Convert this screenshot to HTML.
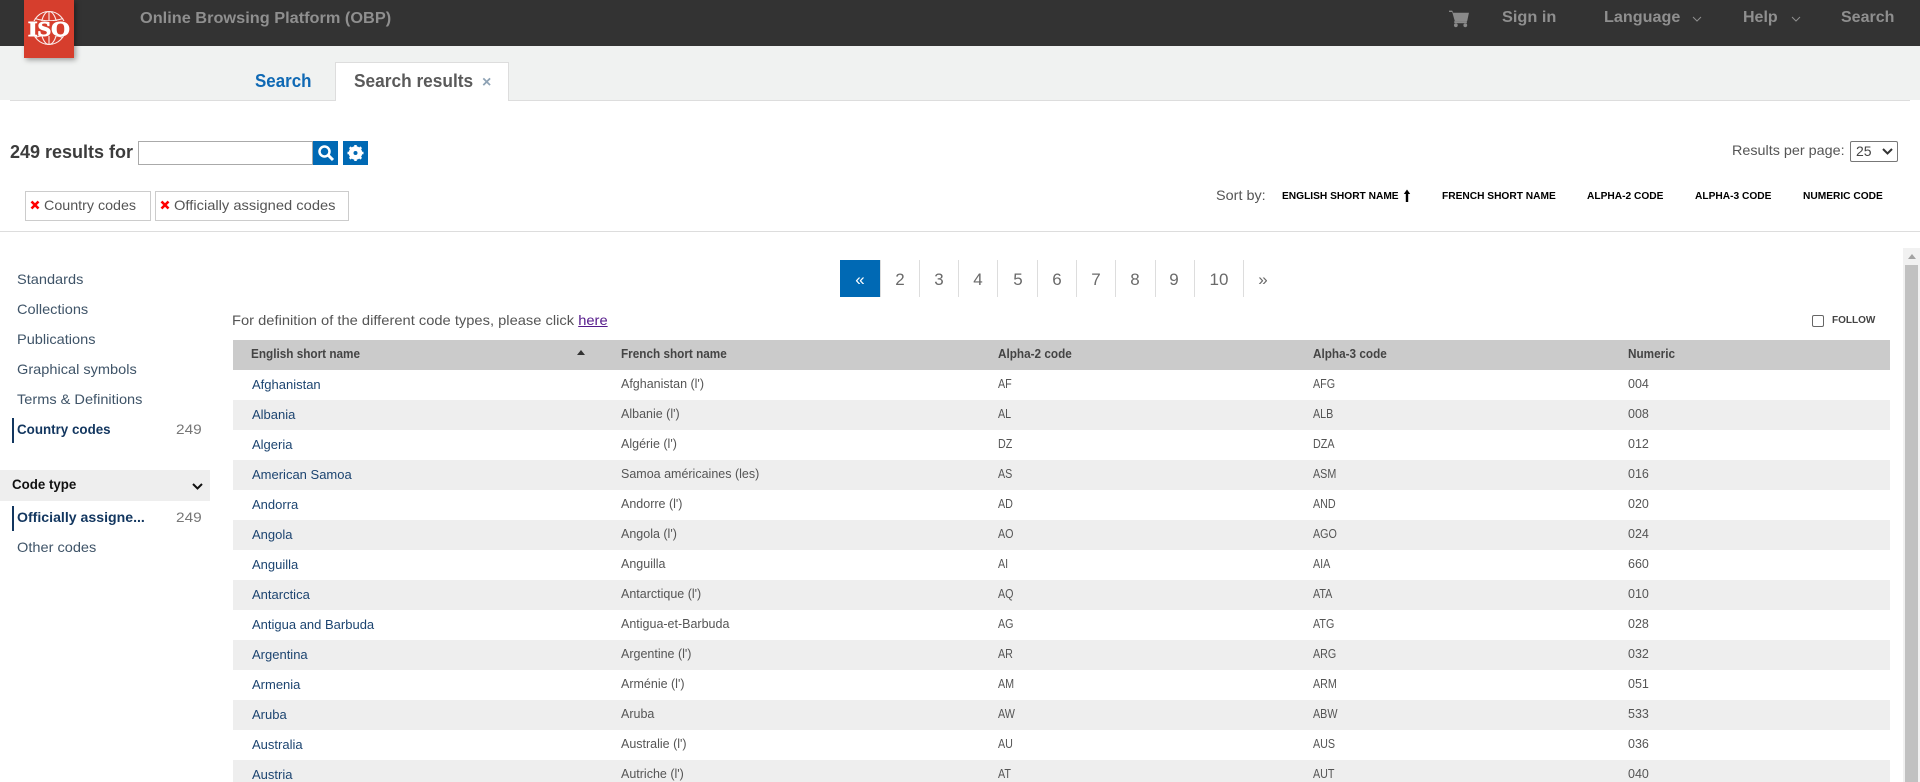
<!DOCTYPE html>
<html lang="en"><head><meta charset="utf-8"><title>Online Browsing Platform (OBP)</title>
<style>
html,body{margin:0;padding:0;width:1920px;height:782px;overflow:hidden;background:#fff;font-family:"Liberation Sans",sans-serif;color:#444}
#w{position:relative;width:1920px;height:782px;overflow:hidden}
.t{position:absolute;white-space:nowrap;line-height:20px;transform-origin:0 50%}
.b{position:absolute}
.nav{color:#8f8f8f;font-weight:bold;font-size:16px}
.side{font-size:14px;color:#3f5468;left:17px;transform:scaleX(1.04)}
.act{font-weight:bold;color:#12365f;font-size:14px}
.num{font-size:14px;color:#777;left:176px;transform:scaleX(1.1)}
.sort{font-size:10.200px;font-weight:bold;color:#000}
.pg{font-size:17px;color:#6a6a6a;top:270px;text-align:center;width:40px}
.sep{position:absolute;top:260px;height:37px;width:1px;background:#ddd}
table{position:absolute;left:233px;top:340px;width:1657px;border-collapse:collapse;table-layout:fixed;font-size:12.5px;color:#555}
th{height:30px;padding:0 0 2px;box-sizing:border-box;text-align:left;background:#cbcbcb;color:#444;font-size:12.5px;font-weight:bold}
th span{transform:scaleX(.94)}
td{height:30px;padding:0 0 2px;box-sizing:border-box}
tr:nth-child(even) td{background:#eee}
td:first-child{color:#1c4470;font-size:13px;padding-left:19px}
th span,td span{display:inline-block;transform-origin:0 50%;white-space:nowrap}
.c{transform:scaleX(.86)}
</style></head><body><div id="w">
<div class="b" style="left:0;top:0;width:1920px;height:46px;background:#333"></div>
<div class="b" style="left:0;top:46px;width:1920px;height:54px;background:#f0f2f1"></div>
<div class="b" style="left:10px;top:100px;width:1900px;height:1px;background:#ddd"></div>
<div class="b" style="left:24px;top:0;width:50px;height:58px;background:#d63e2d;box-shadow:2px 2px 5px rgba(0,0,0,.35)"></div>
<svg class="b" style="left:24px;top:0" width="50" height="58" viewBox="0 0 50 58"><g fill="none" stroke="#fff" stroke-width="1.1" opacity=".9"><circle cx="25" cy="28" r="16.5"/><ellipse cx="25" cy="28" rx="8" ry="16.5"/><path d="M25 11.5V45M11 18.5Q25 23 39 18.5M11 37.5Q25 33 39 37.5"/></g><rect x="3" y="21" width="44" height="15" fill="#d63e2d"/><text x="4" y="36" font-family="Liberation Serif" font-weight="bold" font-size="21" fill="#fff" stroke="#fff" stroke-width=".9" textLength="42" lengthAdjust="spacingAndGlyphs">ISO</text></svg>
<span class="t nav" style="left:140px;top:9px;transform:scaleX(1.02)">Online Browsing Platform (OBP)</span>
<svg class="b" style="left:1448px;top:9px" width="22" height="19" viewBox="0 0 21 18"><path d="M1 1.5h3l1 2h15l-1.700 8H6.500L4 2.800H1z" fill="#8a8a8a"/><path d="M6 11.500h12v2H6z" fill="#8a8a8a"/><circle cx="7.500" cy="15.500" r="1.800" fill="#8a8a8a"/><circle cx="16.500" cy="15.500" r="1.800" fill="#8a8a8a"/></svg>
<span class="t nav" style="left:1502px;top:8px;transform:scaleX(1.02)">Sign in</span>
<span class="t nav" style="left:1604px;top:8px;transform:scaleX(1.01)">Language</span>
<svg class="b" style="left:1692px;top:16px" width="10" height="6"><path d="M1 1l4 4 4-4" fill="none" stroke="#8f8f8f"/></svg>
<span class="t nav" style="left:1743px;top:8px;transform:scaleX(1)">Help</span>
<svg class="b" style="left:1791px;top:16px" width="10" height="6"><path d="M1 1l4 4 4-4" fill="none" stroke="#8f8f8f"/></svg>
<span class="t nav" style="left:1841px;top:8px;transform:scaleX(1)">Search</span>
<div class="b" style="left:335px;top:62px;width:174px;height:39px;background:#fff;border:1px solid #ddd;border-bottom:0;box-sizing:border-box"></div>
<span class="t" style="left:255px;top:71px;font-size:18px;font-weight:bold;color:#0f69b4;transform:scaleX(.94)">Search</span>
<span class="t" style="left:354px;top:71px;font-size:18px;font-weight:bold;color:#5a5a5a;transform:scaleX(.96)">Search results</span>
<span class="t" style="left:482px;top:73px;font-size:16px;font-weight:bold;color:#8fa3b5">×</span>
<span class="t" style="left:10px;top:142px;font-size:18px;font-weight:bold;color:#3c3c3c">249 results for</span>
<div class="b" style="left:138px;top:141px;width:175px;height:24px;box-sizing:border-box;border:1px solid #aaa;background:#fff"></div>
<div class="b" style="left:313px;top:141px;width:25px;height:24px;background:#0069b4"></div>
<svg class="b" style="left:313px;top:141px" width="25" height="24"><circle cx="11.500" cy="10.500" r="5" fill="none" stroke="#fff" stroke-width="2.500"/><path d="M15 14l5 5" stroke="#fff" stroke-width="3"/></svg>
<div class="b" style="left:343px;top:141px;width:25px;height:24px;background:#0069b4"></div>
<svg class="b" style="left:343px;top:141px" width="25" height="24"><circle cx="12.500" cy="12" r="5" fill="none" stroke="#fff" stroke-width="3.500"/><path d="M12.500 4v16M4.500 12h16M6.800 6.300l11.400 11.400M18.200 6.300L6.800 17.700" stroke="#fff" stroke-width="2.500"/><circle cx="12.500" cy="12" r="2" fill="#0069b4"/></svg>
<div class="b" style="left:25px;top:191px;width:126px;height:30px;box-sizing:border-box;border:1px solid #ccc"></div>
<div class="b" style="left:155px;top:191px;width:194px;height:30px;box-sizing:border-box;border:1px solid #ccc"></div>
<svg class="b" style="left:30px;top:200px" width="10" height="10"><path d="M1.500 1.500l7 7M8.500 1.500l-7 7" stroke="#f00" stroke-width="2.600"/></svg>
<svg class="b" style="left:160px;top:200px" width="10" height="10"><path d="M1.500 1.500l7 7M8.500 1.500l-7 7" stroke="#f00" stroke-width="2.600"/></svg>
<span class="t" style="left:44px;top:195px;font-size:14px;color:#555;transform:scaleX(1.02)">Country codes</span>
<span class="t" style="left:174px;top:195px;font-size:14px;color:#555;transform:scaleX(1.05)">Officially assigned codes</span>
<div class="b" style="left:0;top:231px;width:1920px;height:1px;background:#ddd"></div>
<span class="t" style="left:1732px;top:140px;font-size:14px;color:#555;transform:scaleX(1.026)">Results per page:</span>
<div class="b" style="left:1850px;top:141px;width:48px;height:21px;box-sizing:border-box;border:1px solid #777;border-radius:2px"></div>
<span class="t" style="left:1856px;top:141px;font-size:14px;color:#444">25</span>
<svg class="b" style="left:1882px;top:148px" width="11" height="7"><path d="M1 1l4.500 4.500L10 1" fill="none" stroke="#333" stroke-width="2"/></svg>
<span class="t" style="left:1216px;top:185px;font-size:14px;color:#555;transform:scaleX(1.03)">Sort by:</span>
<span class="t sort" style="left:1282px;top:187px">ENGLISH SHORT NAME</span>
<svg class="b" style="left:1402px;top:189px" width="10" height="14"><path d="M5 .5l3.200 4.500H6.200v8H3.800V5H1.800z" fill="#000"/></svg>
<span class="t sort" style="left:1442px;top:187px">FRENCH SHORT NAME</span>
<span class="t sort" style="left:1587px;top:187px">ALPHA-2 CODE</span>
<span class="t sort" style="left:1695px;top:187px">ALPHA-3 CODE</span>
<span class="t sort" style="left:1803px;top:187px">NUMERIC CODE</span>
<span class="t side" style="top:269px">Standards</span>
<span class="t side" style="top:299px">Collections</span>
<span class="t side" style="top:329px">Publications</span>
<span class="t side" style="top:359px">Graphical symbols</span>
<span class="t side" style="top:389px">Terms &amp; Definitions</span>
<div class="b" style="left:12px;top:418px;width:2px;height:25px;background:#12365f"></div>
<span class="t act" style="left:17px;top:419px;transform:scaleX(.955)">Country codes</span>
<span class="t num" style="top:419px">249</span>
<div class="b" style="left:0;top:470px;width:210px;height:31px;background:#eee"></div>
<span class="t" style="left:12px;top:474px;font-size:14px;font-weight:bold;color:#111;transform:scaleX(.95)">Code type</span>
<svg class="b" style="left:192px;top:483px" width="11" height="7"><path d="M1 1l4.500 4.500L10 1" fill="none" stroke="#111" stroke-width="2"/></svg>
<div class="b" style="left:12px;top:506px;width:2px;height:25px;background:#12365f"></div>
<span class="t act" style="left:17px;top:507px;transform:scaleX(1.008)">Officially assigne...</span>
<span class="t num" style="top:507px">249</span>
<span class="t side" style="top:537px">Other codes</span>
<div class="b" style="left:840px;top:260px;width:40px;height:37px;background:#0069b4"></div>
<span class="t pg" style="left:840px;color:#fff">«</span><span class="t pg" style="left:880px">2</span><span class="t pg" style="left:919px">3</span><span class="t pg" style="left:958px">4</span><span class="t pg" style="left:998px">5</span><span class="t pg" style="left:1037px">6</span><span class="t pg" style="left:1076px">7</span><span class="t pg" style="left:1115px">8</span><span class="t pg" style="left:1154px">9</span><span class="t pg" style="left:1199px">10</span><span class="t pg" style="left:1243px">»</span>
<i class="sep" style="left:880px"></i><i class="sep" style="left:919px"></i><i class="sep" style="left:958px"></i><i class="sep" style="left:997px"></i><i class="sep" style="left:1037px"></i><i class="sep" style="left:1076px"></i><i class="sep" style="left:1115px"></i><i class="sep" style="left:1155px"></i><i class="sep" style="left:1194px"></i><i class="sep" style="left:1243px"></i>
<span class="t" style="left:232px;top:310px;font-size:14px;color:#555;transform:scaleX(1.05)">For definition of the different code types, please click <span style="color:#551a8b;text-decoration:underline">here</span></span>
<div class="b" style="left:1812px;top:315px;width:12px;height:12px;box-sizing:border-box;border:1px solid #666;border-radius:2px"></div>
<span class="t" style="left:1832px;top:310.500px;font-size:10px;font-weight:bold;color:#444">FOLLOW</span>
<table>
<colgroup><col style="width:388px"><col style="width:377px"><col style="width:315px"><col style="width:315px"><col></colgroup>
<thead><tr><th style="padding-left:18px;position:relative"><span>English short name</span><svg style="position:absolute;left:343px;top:10px" width="10" height="6"><path d="M5 0l4 5H1z" fill="#333"/></svg></th><th><span>French short name</span></th><th><span>Alpha-2 code</span></th><th><span>Alpha-3 code</span></th><th><span>Numeric</span></th></tr></thead>
<tbody>
<tr><td>Afghanistan</td><td>Afghanistan (l')</td><td><span class="c">AF</span></td><td><span class="c">AFG</span></td><td>004</td></tr>
<tr><td>Albania</td><td>Albanie (l')</td><td><span class="c">AL</span></td><td><span class="c">ALB</span></td><td>008</td></tr>
<tr><td>Algeria</td><td>Algérie (l')</td><td><span class="c">DZ</span></td><td><span class="c">DZA</span></td><td>012</td></tr>
<tr><td>American Samoa</td><td>Samoa américaines (les)</td><td><span class="c">AS</span></td><td><span class="c">ASM</span></td><td>016</td></tr>
<tr><td>Andorra</td><td>Andorre (l')</td><td><span class="c">AD</span></td><td><span class="c">AND</span></td><td>020</td></tr>
<tr><td>Angola</td><td>Angola (l')</td><td><span class="c">AO</span></td><td><span class="c">AGO</span></td><td>024</td></tr>
<tr><td>Anguilla</td><td>Anguilla</td><td><span class="c">AI</span></td><td><span class="c">AIA</span></td><td>660</td></tr>
<tr><td>Antarctica</td><td>Antarctique (l')</td><td><span class="c">AQ</span></td><td><span class="c">ATA</span></td><td>010</td></tr>
<tr><td>Antigua and Barbuda</td><td>Antigua-et-Barbuda</td><td><span class="c">AG</span></td><td><span class="c">ATG</span></td><td>028</td></tr>
<tr><td>Argentina</td><td>Argentine (l')</td><td><span class="c">AR</span></td><td><span class="c">ARG</span></td><td>032</td></tr>
<tr><td>Armenia</td><td>Arménie (l')</td><td><span class="c">AM</span></td><td><span class="c">ARM</span></td><td>051</td></tr>
<tr><td>Aruba</td><td>Aruba</td><td><span class="c">AW</span></td><td><span class="c">ABW</span></td><td>533</td></tr>
<tr><td>Australia</td><td>Australie (l')</td><td><span class="c">AU</span></td><td><span class="c">AUS</span></td><td>036</td></tr>
<tr><td>Austria</td><td>Autriche (l')</td><td><span class="c">AT</span></td><td><span class="c">AUT</span></td><td>040</td></tr>
</tbody></table>
<div class="b" style="left:1903px;top:248px;width:17px;height:534px;background:#f1f1f1"></div>
<div class="b" style="left:1905px;top:265px;width:13px;height:517px;background:#c1c1c1"></div>
<svg class="b" style="left:1907px;top:254px" width="10" height="6"><path d="M5 0l4 5H1z" fill="#a3a3a3"/></svg>
</div></body></html>
